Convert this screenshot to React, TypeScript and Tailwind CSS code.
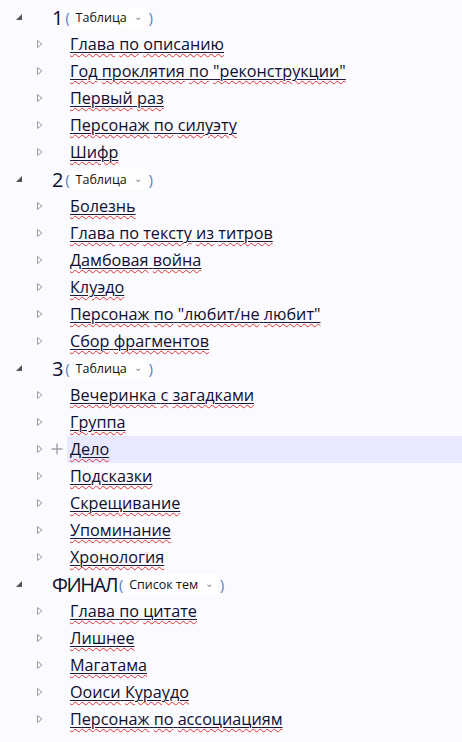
import React from "react";

type Group = { title: string; kind: string; items: string[] };

const groups: Group[] = [
  { title: "1", kind: "Таблица", items: ["Глава по описанию", "Год проклятия по \"реконструкции\"", "Первый раз", "Персонаж по силуэту", "Шифр"] },
  { title: "2", kind: "Таблица", items: ["Болезнь", "Глава по тексту из титров", "Дамбовая война", "Клуэдо", "Персонаж по \"любит/не любит\"", "Сбор фрагментов"] },
  { title: "3", kind: "Таблица", items: ["Вечеринка с загадками", "Группа", "Дело", "Подсказки", "Скрещивание", "Упоминание", "Хронология"] },
  { title: "ФИНАЛ", kind: "Список тем", items: ["Глава по цитате", "Лишнее", "Магатама", "Ооиси Кураудо", "Персонаж по ассоциациям"] },
];

const font = { fontFamily: '"Open Sans", "Noto Sans", sans-serif' };

function Words({ text }: { text: string }) {
  const parts = text.split(" ");
  return (
    <span className="underline decoration-[#1b1b3a] decoration-1 underline-offset-[2px]">
      {parts.map((w, i) => (
        <React.Fragment key={i}>
          <span className="underline decoration-wavy decoration-[#e03030] decoration-1 underline-offset-[3px]">{w}</span>
          {i < parts.length - 1 ? " " : ""}
        </React.Fragment>
      ))}
    </span>
  );
}

function Item({ text, hover }: { text: string; hover?: boolean }) {
  return (
    <div className="flex h-[27px] items-center">
      <div className="w-[67px] flex items-center shrink-0 h-full">
        <svg width="8" height="10" viewBox="0 0 8 10" className="ml-[36px] mt-[-2px]">
          <path d="M1.5 1.5 L6 5 L1.5 8.5 Z" fill="none" stroke="#9a9aa6" strokeWidth="1" />
        </svg>
        {hover ? (
          <svg width="12" height="12" viewBox="0 0 12 12" className="ml-[7px] mt-[-2px]">
            <path d="M6 0.5 V11.5 M0.5 6 H11.5" stroke="#a0a0a8" strokeWidth="1.4" />
          </svg>
        ) : null}
      </div>
      <div className={`flex-1 h-full flex items-center pl-[3px] ${hover ? "bg-[#e8e8ff]" : ""}`}>
        <span className="text-[16.2px] text-[#0e0e2e] leading-none" style={font}>
          <Words text={text} />
        </span>
      </div>
    </div>
  );
}

function Header({ g }: { g: Group }) {
  return (
    <div className="flex h-[27px] items-center">
      <div className="w-[52px] shrink-0 flex items-center">
        <svg width="8" height="8" viewBox="0 0 8 8" className="ml-[15px] mt-[-1px]">
          <path d="M7 1 L7 7 L1 7 Z" fill="#555560" />
        </svg>
      </div>
      <span className={`text-[20px] leading-none text-[#0e0e2e] ${g.title.length > 1 ? "tracking-[-1.5px]" : ""}`} style={font}>{g.title}</span>
      <span className="text-[14px] leading-none text-[#5577bb] ml-[2px]" style={font}>(</span>
      <span className="bg-white h-[21px] flex items-center pl-[4px] pr-[5px] ml-[2px]" style={font}>
        <span className="text-[12.5px] text-[#111] leading-none mt-[2px]">{g.kind}</span>
        <span className="text-[10px] text-[#888] ml-[7px] leading-none mt-[-3px]">⌄</span>
      </span>
      <span className="text-[14px] leading-none text-[#5577bb] ml-[2px]" style={font}>)</span>
    </div>
  );
}

export default function App() {
  return (
    <div className="w-[462px] h-[742px] bg-[#fafaff] pt-[4px] overflow-hidden">
      {groups.map((g) => (
        <div key={g.title}>
          <Header g={g} />
          {g.items.map((it) => (
            <Item key={it} text={it} hover={it === "Дело"} />
          ))}
        </div>
      ))}
    </div>
  );
}
